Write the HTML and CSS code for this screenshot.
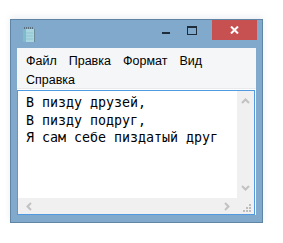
FILE: index.html
```html
<!DOCTYPE html>
<html lang="ru">
<head>
    <meta charset="UTF-8">
    <title>Блокнот</title>
    <link rel="stylesheet" href="styles.css">
</head>
<body>
<div class="window">
    <div class="titlebar">
        <svg class="app-icon" width="14" height="15" viewBox="0 0 14 15">
            <rect x="1" y="2" width="12" height="13" fill="#a9d6e0"/>
            <rect x="1" y="2" width="3" height="13" fill="#7cbccc"/>
            <rect x="12" y="2" width="1" height="13" fill="#6a8c96"/>
            <line x1="4" y1="6" x2="11" y2="6" stroke="#8fc3d0"/>
            <line x1="4" y1="9" x2="11" y2="9" stroke="#8fc3d0"/>
            <line x1="4" y1="12" x2="11" y2="12" stroke="#8fc3d0"/>
            <path d="M2 1h1M4 1h1M6 1h1M8 1h1M10 1h1" stroke="#333"/>
        </svg>
        <div class="spacer"></div>
        <div class="ctl"><span class="min"></span></div>
        <div class="ctl"><span class="max"></span></div>
        <div class="close">
            <svg width="9" height="8" viewBox="0 0 9 8">
                <path d="M1 0.5l7 7M8 0.5l-7 7" stroke="#fff" stroke-width="2"/>
            </svg>
        </div>
    </div>
    <div class="client">
        <div class="menu">
            <div class="menu-row">
                <span>Файл</span>
                <span>Правка</span>
                <span>Формат</span>
                <span>Вид</span>
            </div>
            <div class="menu-row">
                <span>Справка</span>
            </div>
        </div>
        <div class="edit">
            <div class="text">В пизду друзей,<br>В пизду подруг,<br>Я сам себе пиздатый друг</div>
            <div class="vscroll">
                <svg width="9" height="6" viewBox="0 0 9 6"><path d="M1 5l3.5-3.5L8 5" fill="none" stroke="#c2c2c2" stroke-width="2"/></svg>
                <svg width="9" height="6" viewBox="0 0 9 6"><path d="M1 1l3.5 3.5L8 1" fill="none" stroke="#c2c2c2" stroke-width="2"/></svg>
            </div>
            <div class="hscroll">
                <svg width="6" height="9" viewBox="0 0 6 9"><path d="M5 1L1.5 4.5 5 8" fill="none" stroke="#c2c2c2" stroke-width="2"/></svg>
                <svg width="6" height="9" viewBox="0 0 6 9"><path d="M1 1l3.5 3.5L1 8" fill="none" stroke="#c2c2c2" stroke-width="2"/></svg>
            </div>
            <div class="corner">
                <svg width="8" height="8" viewBox="0 0 8 8">
                    <path d="M6 0h2v2h-2zM3 3h2v2h-2zM6 3h2v2h-2zM0 6h2v2h-2zM3 6h2v2h-2zM6 6h2v2h-2z" fill="#bdbdbd"/>
                </svg>
            </div>
        </div>
    </div>
</div>
</body>
</html>
```

FILE: styles.css
```css
body {
    margin: 0;
    background: #fff;
    font-family: "Liberation Sans", Arial, sans-serif;
}
.window {
    width: 253px;
    height: 204px;
    box-sizing: border-box;
    margin: 19px 0 0 10px;
    border: 1px solid #5f84a4;
    background: #80a9cb;
    padding: 0 6px 7px 6px;
    display: flex;
    flex-direction: column;
    box-shadow: 0 -2px 6px rgba(120, 140, 170, 0.15);
}
.titlebar {
    height: 28px;
    display: flex;
    align-items: flex-start;
}
.app-icon {
    margin: 7px 0 0 5px;
}
.spacer {
    flex: 1;
}
.ctl {
    width: 26px;
    height: 20px;
    display: flex;
    align-items: center;
    justify-content: center;
}
.min {
    width: 8px;
    height: 2px;
    margin-top: 6px;
    background: #1f2d3a;
}
.max {
    width: 8px;
    height: 6px;
    border: 1px solid #1f2d3a;
    border-top-width: 2px;
}
.close {
    width: 45px;
    height: 20px;
    margin-right: -1px;
    margin-left: 7px;
    background: #c75050;
    display: flex;
    align-items: center;
    justify-content: center;
}
.client {
    flex: 1;
    background: #fff;
    display: flex;
    flex-direction: column;
}
.menu {
    height: 41px;
    background: #f5f6f7;
    border-bottom: 1px solid #e8eaec;
    padding: 3px 0 0 9px;
    box-sizing: border-box;
}
.menu-row {
    display: flex;
    height: 19px;
    align-items: center;
    font-size: 12.5px;
    color: #000;
    gap: 12px;
}
.edit {
    flex: 1;
    margin: 1px 1px 0 0;
    border: 1px solid #4f9ae0;
    display: grid;
    grid-template-columns: 1fr 17px;
    grid-template-rows: 1fr 16px;
}
.text {
    font-family: "DejaVu Sans Mono", monospace;
    font-size: 13.3px;
    line-height: 17.5px;
    padding: 3px 0 0 8px;
    color: #000;
    white-space: nowrap;
}
.vscroll {
    background: #f0f0f0;
    display: flex;
    flex-direction: column;
    justify-content: space-between;
    align-items: center;
    padding: 7px 0 7px;
}
.hscroll {
    background: #f0f0f0;
    display: flex;
    justify-content: space-between;
    align-items: center;
    padding: 0 7px 0 8px;
}
.corner {
    background: #f0f0f0;
    display: flex;
    align-items: flex-end;
    justify-content: flex-end;
    padding: 0 3px 2px 0;
}
```
